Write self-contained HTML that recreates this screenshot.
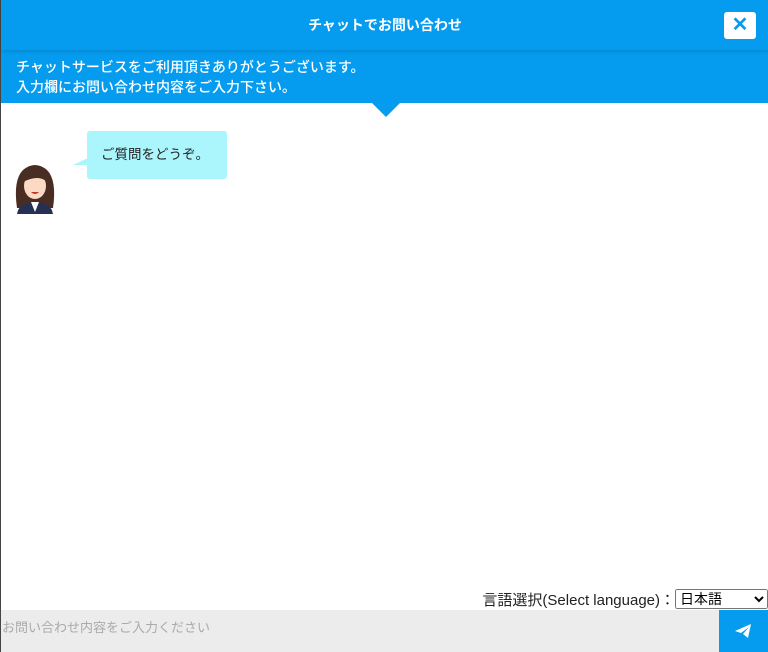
<!DOCTYPE html>
<html><head><meta charset="utf-8"><style>
*{margin:0;padding:0;box-sizing:border-box}
body{width:768px;height:652px;overflow:hidden;background:#fff;font-family:"Liberation Sans","Noto Sans CJK JP",sans-serif;position:relative;border-left:1px solid #444}
.hd{position:absolute;left:0;top:0;width:768px;height:50px;background:#059cf0;color:#fff;font-weight:bold;font-size:14px;text-align:center;line-height:50px;box-shadow:0 2px 4px rgba(0,0,0,.12);z-index:2}
.x{position:absolute;left:723px;top:12px;width:32px;height:27px;background:#fff;border-radius:3px;color:#059cf0;font-size:20px;line-height:27px;font-weight:bold}
.bn{position:absolute;left:0;top:50px;width:768px;height:53px;background:#059cf0;color:#fff;font-size:14px;line-height:20px;padding:7px 0 0 15px;font-weight:500}
.tri{position:absolute;left:371px;top:103px;width:0;height:0;border-left:14px solid transparent;border-right:14px solid transparent;border-top:14px solid #059cf0}
.bub{position:absolute;left:86px;top:131px;width:140px;height:48px;background:#aaf6fc;border-radius:3px;font-size:13.5px;color:#222;line-height:48px;padding-left:14px}
.bt{position:absolute;left:72px;top:158px;width:0;height:0;border-top:7px solid transparent;border-right:15px solid #aaf6fc}
.lang{position:absolute;right:0;top:589px;font-size:15px;color:#222}
select{font-size:14px;height:20px;width:93px;font-family:inherit;vertical-align:top}
.in{position:absolute;left:0;top:610px;width:718px;height:42px;background:#ececec;color:#aaa;font-size:13px;line-height:36px;padding-left:1px}
.sd{position:absolute;left:718px;top:610px;width:50px;height:42px;background:#059cf0}
</style></head><body>
<div class="hd">チャットでお問い合わせ<div class="x">✕</div></div>
<div class="bn">チャットサービスをご利用頂きありがとうございます。<br>入力欄にお問い合わせ内容をご入力下さい。</div>
<div class="tri"></div>
<svg style="position:absolute;left:10px;top:160px" width="48" height="55" viewBox="0 0 48 55">
<path d="M6 48 Q2 20 12 10 Q24 0 36 10 Q46 20 42 48Z" fill="#4a2d22"/>
<path d="M6 54 Q8 42 24 42 Q40 42 42 54Z" fill="#263052"/>
<path d="M20 42 L24 52 L28 42Z" fill="#fff"/>
<ellipse cx="24" cy="26" rx="11" ry="13" fill="#fbd9c2"/>
<path d="M12 22 Q16 10 24 11 Q34 11 36 22 Q28 14 12 22Z" fill="#4a2d22"/>
<path d="M20 32 Q24 36 28 32Z" fill="#c0392b"/>
</svg>
<div class="bt"></div>
<div class="bub">ご質問をどうぞ。</div>
<div class="lang">言語選択(Select language)：<select><option>日本語</option></select></div>
<div class="in">お問い合わせ内容をご入力ください</div>
<div class="sd"><svg style="position:absolute;left:16px;top:14px" width="16" height="14" viewBox="0 0 16 14"><path d="M0 7 L16 0 L13 14 L8 10 L14 3 L6 9 Z" fill="#fff"/></svg></div>
</body></html>
